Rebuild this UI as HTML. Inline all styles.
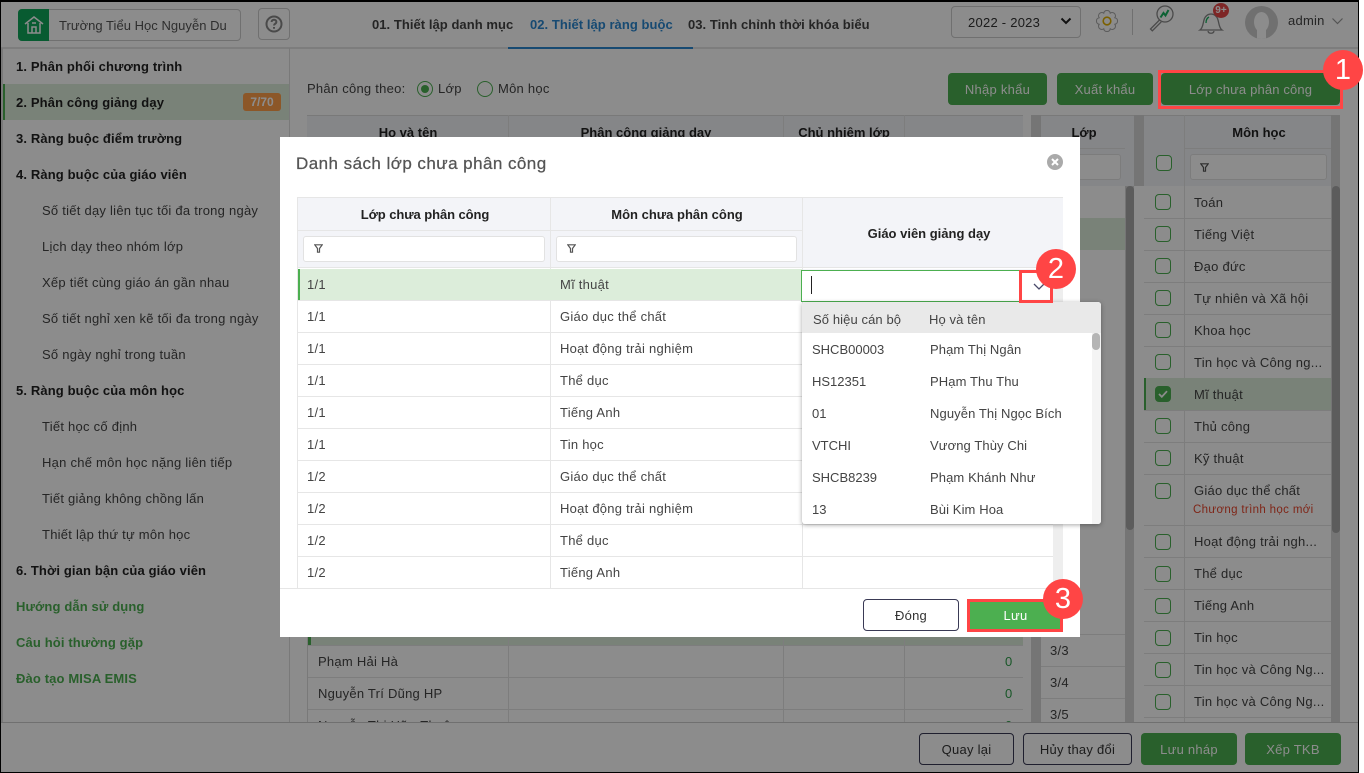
<!DOCTYPE html>
<html lang="vi"><head><meta charset="utf-8"><title>Danh sách lớp chưa phân công</title>
<style>
*{box-sizing:border-box}
html,body{margin:0;padding:0;width:1364px;height:773px;overflow:hidden;background:#fff}
body{position:relative;font-family:"Liberation Sans","DejaVu Sans",sans-serif;font-size:13px;letter-spacing:.25px;color:#444}
div,span,svg{position:absolute}
.t{white-space:nowrap;line-height:22px;height:22px}
.b{font-weight:700;color:#222;letter-spacing:.13px}
.h{letter-spacing:0}
.c{transform:translateX(-50%)}
.g{color:#4caf50;font-weight:700;letter-spacing:.13px}
.l{background:#e3e3e3}
.btn{background:#4caf50;border-radius:4px;color:#fff;text-align:center;line-height:34px;height:32px;white-space:nowrap}
.obtn{background:#fff;border:1px solid #3a3a55;border-radius:4px;color:#333;text-align:center;line-height:32px;height:32px;white-space:nowrap}
.ck{width:16px;height:16px;border:1.5px solid #4caf50;border-radius:4px;background:#fff;left:1155px}
.inp{background:#fff;border:1px solid #e2e2e2;border-radius:3px}
.red{border:3px solid #ff4545}
.num{width:40px;height:40px;border-radius:50%;background:#ff4545;color:#fff;text-align:center;font-size:29px;line-height:40px;letter-spacing:0}
#dd .t{letter-spacing:.1px}
</style></head><body>

<!-- BASE PAGE -->
<div id="page" style="left:0;top:0;width:1358px;height:772px;background:#fff;overflow:hidden">
  <!-- header -->
  <div class="l" style="left:0;top:47px;width:1358px;height:2px"></div>
  <div style="left:18px;top:9px;width:223px;height:32px;border:1px solid #ccc;border-radius:4px"></div>
  <div style="left:18px;top:9px;width:31px;height:32px;background:#0fa65a;border-radius:4px 0 0 4px"></div>
  <svg style="left:24px;top:15px" width="20" height="20" viewBox="0 0 20 20" fill="none" stroke="#fff" stroke-width="1.5"><path d="M1 9 10 2l9 7M4 8v10h12V8M8 18v-6h4v6M8 8h4"/></svg>
  <span class="t" style="left:59px;top:15px;color:#555;letter-spacing:.03px">Trường Tiểu Học Nguyễn Du</span>
  <div style="left:258px;top:8px;width:32px;height:32px;border:1px solid #ccc;border-radius:4px"></div>
  <svg style="left:265px;top:15px" width="18" height="18" viewBox="0 0 18 18" fill="none" stroke="#888" stroke-width="2"><circle cx="9" cy="9" r="7.5"/><path d="M6.6 7c0-3 4.8-3 4.8 0 0 1.800-2.400 1.700-2.400 3.500M9 12v1.800"/></svg>
  <span class="t b" style="left:372px;top:14px;color:#444;letter-spacing:.05px">01. Thiết lập danh mục</span>
  <span class="t b" style="left:530px;top:14px;color:#2a87d0;letter-spacing:.05px">02. Thiết lập ràng buộc</span>
  <span class="t b" style="left:688px;top:14px;color:#444;letter-spacing:.05px">03. Tinh chỉnh thời khóa biểu</span>
  <div style="left:508px;top:47px;width:185px;height:2px;background:#2a87d0"></div>
  <div style="left:951px;top:6px;width:130px;height:32px;border:1px solid #ccc;border-radius:4px"></div>
  <span class="t" style="left:968px;top:12px;color:#333">2022 - 2023</span>
  <svg style="left:1060px;top:17px" width="12" height="9" viewBox="0 0 12 9" fill="none" stroke="#222" stroke-width="2"><path d="M1.500 1.500 6 6l4.500-4.500"/></svg>
  <svg style="left:1096px;top:10px" width="22" height="22" viewBox="0 0 22 22" fill="none"><circle cx="11" cy="11" r="3.800" stroke="#e0b000" stroke-width="1.600"/><path d="M18.850 7.750A3.300 3.300 0 0 1 18.850 14.250 3.300 3.300 0 0 1 14.250 18.850 3.300 3.300 0 0 1 7.750 18.850 3.300 3.300 0 0 1 3.150 14.250 3.300 3.300 0 0 1 3.150 7.750 3.300 3.300 0 0 1 7.750 3.150 3.300 3.300 0 0 1 14.250 3.150 3.300 3.300 0 0 1 18.850 7.750Z" stroke="#aaa" stroke-width="1.100"/></svg>
  <div class="l" style="left:1132px;top:9px;width:1px;height:26px;background:#ccc"></div>
  <svg style="left:1148px;top:5px" width="28" height="28" viewBox="0 0 28 28" fill="none"><circle cx="17" cy="9" r="8" stroke="#888" stroke-width="1.300"/><path d="M11.500 15 2.500 24l1.800 1.800 9-9" stroke="#888" stroke-width="1.300"/><path d="m12.500 12.500 3-4.500 2 2.500 3-5.500" stroke="#17b35f" stroke-width="2"/></svg>
  <svg style="left:1198px;top:8px" width="26" height="27" viewBox="0 0 26 27" fill="none" stroke="#888" stroke-width="1.300"><path d="M2 22c3-2 3-7 4-10 1-4 4-6 7-6s6 2 7 6c1 3 1 8 4 10zM10 23c.5 3 5.500 3 6 0"/><path d="M8 15c0-3 1-5 3-6" stroke="#17b35f"/></svg>
  <div style="left:1213px;top:3px;width:16px;height:15px;border-radius:50%;background:#e64545;color:#fff;font-size:10px;font-weight:700;text-align:center;line-height:15px;letter-spacing:0">9+</div>
  <div style="left:1245px;top:6px;width:33px;height:33px;border-radius:50%;background:#ccc;overflow:hidden"><div style="left:9px;top:6px;width:15px;height:20px;border-radius:50%;background:#fff"></div><div style="left:12px;top:24px;width:9px;height:9px;background:#fff"></div></div>
  <span class="t" style="left:1288px;top:10px;color:#444">admin</span>
  <svg style="left:1332px;top:18px" width="11" height="7" viewBox="0 0 11 7" fill="none" stroke="#999" stroke-width="1.200"><path d="M.5.500l5 5 5-5"/></svg>

  <!-- sidebar -->
  <div style="left:289px;top:48px;width:1px;height:674px;background:#ddd"></div>
  <div style="left:0;top:48px;width:3px;height:724px;background:#ddd"></div>
  <div style="left:3px;top:84px;width:286px;height:36px;background:#dcedda"></div>
  <div style="left:3px;top:84px;width:2px;height:36px;background:#4caf50"></div>
  <span class="t b" style="left:16px;top:56px">1. Phân phối chương trình</span>
  <span class="t b" style="left:16px;top:92px">2. Phân công giảng dạy</span>
  <div style="left:243px;top:93px;width:38px;height:18px;background:#ff9f4a;border-radius:3px;color:#fff;font-size:12px;font-weight:700;text-align:center;line-height:18px;letter-spacing:0">7/70</div>
  <span class="t b" style="left:16px;top:128px">3. Ràng buộc điểm trường</span>
  <span class="t b" style="left:16px;top:164px">4. Ràng buộc của giáo viên</span>
  <span class="t" style="left:42px;top:200px">Số tiết dạy liên tục tối đa trong ngày</span>
  <span class="t" style="left:42px;top:236px">Lịch dạy theo nhóm lớp</span>
  <span class="t" style="left:42px;top:272px">Xếp tiết cùng giáo án gần nhau</span>
  <span class="t" style="left:42px;top:308px">Số tiết nghỉ xen kẽ tối đa trong ngày</span>
  <span class="t" style="left:42px;top:344px">Số ngày nghỉ trong tuần</span>
  <span class="t b" style="left:16px;top:380px">5. Ràng buộc của môn học</span>
  <span class="t" style="left:42px;top:416px">Tiết học cố định</span>
  <span class="t" style="left:42px;top:452px">Hạn chế môn học nặng liên tiếp</span>
  <span class="t" style="left:42px;top:488px">Tiết giảng không chồng lấn</span>
  <span class="t" style="left:42px;top:524px">Thiết lập thứ tự môn học</span>
  <span class="t b" style="left:16px;top:560px">6. Thời gian bận của giáo viên</span>
  <span class="t g" style="left:16px;top:596px">Hướng dẫn sử dụng</span>
  <span class="t g" style="left:16px;top:632px">Câu hỏi thường gặp</span>
  <span class="t g" style="left:16px;top:668px">Đào tạo MISA EMIS</span>

  <!-- toolbar -->
  <span class="t" style="left:307px;top:78px">Phân công theo:</span>
  <div style="left:417px;top:81px;width:16px;height:16px;border:1.500px solid #4caf50;border-radius:50%"></div>
  <div style="left:421px;top:85px;width:8px;height:8px;background:#4caf50;border-radius:50%"></div>
  <span class="t" style="left:438px;top:78px">Lớp</span>
  <div style="left:477px;top:81px;width:16px;height:16px;border:1.500px solid #4caf50;border-radius:50%"></div>
  <span class="t" style="left:498px;top:78px">Môn học</span>
  <div class="btn" style="left:948px;top:73px;width:99px">Nhập khẩu</div>
  <div class="btn" style="left:1057px;top:73px;width:96px">Xuất khẩu</div>
  <div class="btn" style="left:1161px;top:73px;width:179px;letter-spacing:.15px">Lớp chưa phân công</div>

  <!-- main table -->
  <div style="left:307px;top:115px;width:716px;height:607px;background:#fff;border-left:1px solid #ddd"></div>
  <div style="left:307px;top:115px;width:716px;height:71px;background:#f3f4f8;border-top:1px solid #ddd"></div>
  <span class="t b h c" style="left:408px;top:122px">Họ và tên</span>
  <span class="t b h c" style="left:646px;top:122px">Phân công giảng dạy</span>
  <span class="t b h c" style="left:844px;top:122px">Chủ nhiệm lớp</span>
  <div style="left:309px;top:630px;width:714px;height:15px;background:#dcedda"></div>
  <div style="left:308px;top:630px;width:3px;height:15px;background:#4caf50"></div>
  <div class="l" style="left:308px;top:645px;width:715px;height:1px"></div>
  <div class="l" style="left:308px;top:677px;width:715px;height:1px"></div>
  <div class="l" style="left:308px;top:709px;width:715px;height:1px"></div>
  <div class="l" style="left:508px;top:115px;width:1px;height:607px"></div>
  <div class="l" style="left:783px;top:115px;width:1px;height:607px"></div>
  <div class="l" style="left:904px;top:115px;width:1px;height:607px"></div>
  <span class="t" style="left:318px;top:651px">Phạm Hải Hà</span>
  <span class="t" style="left:318px;top:683px">Nguyễn Trí Dũng HP</span>
  <span class="t" style="left:318px;top:715px">Nguyễn Thị Hữu Thuận</span>
  <span class="t" style="left:1005px;top:651px;color:#2e9e4a">0</span>
  <span class="t" style="left:1005px;top:683px;color:#2e9e4a">0</span>
  <span class="t" style="left:1005px;top:715px;color:#2e9e4a">0</span>
  <div style="left:1031px;top:115px;width:10px;height:607px;background:#d5d5d5"></div>

  <!-- class table -->
  <div style="left:1041px;top:115px;width:93px;height:71px;background:#f3f4f8;border-top:1px solid #ddd"></div>
  <div class="l" style="left:1041px;top:148px;width:84px;height:1px"></div>
  <span class="t b h c" style="left:1084px;top:122px">Lớp</span>
  <div class="inp" style="left:1050px;top:154px;width:71px;height:26px"></div>
  <div style="left:1080px;top:218px;width:45px;height:32px;background:#dcedda"></div>
  <div class="l" style="left:1041px;top:634px;width:84px;height:1px"></div>
  <div class="l" style="left:1041px;top:666px;width:84px;height:1px"></div>
  <div class="l" style="left:1041px;top:698px;width:84px;height:1px"></div>
  <span class="t" style="left:1050px;top:640px">3/3</span>
  <span class="t" style="left:1050px;top:672px">3/4</span>
  <span class="t" style="left:1050px;top:704px">3/5</span>
  <div style="left:1125px;top:186px;width:9px;height:536px;background:#d5d5d5"></div>
  <div style="left:1134px;top:115px;width:10px;height:71px;background:#d5d5d5"></div>
  <div style="left:1126px;top:186px;width:8px;height:344px;background:#a8a8a8;border-radius:4px"></div>

  <!-- subjects table -->
  <div style="left:1144px;top:115px;width:187px;height:71px;background:#f3f4f8;border-top:1px solid #ddd"></div>
  <div class="l" style="left:1184px;top:115px;width:1px;height:607px"></div>
  <div class="l" style="left:1184px;top:148px;width:147px;height:1px"></div>
  <span class="t b h c" style="left:1259px;top:122px">Môn học</span>
  <div class="ck" style="left:1156px;top:155px"></div>
  <div class="inp" style="left:1190px;top:154px;width:137px;height:26px"></div>
  <svg style="left:1200px;top:163px" width="9" height="9" viewBox="0 0 9 9" fill="none" stroke="#555" stroke-width="1.200"><path d="M.8.800h7.400L5.500 4.500v3.700h-2V4.500z"/></svg>
  <div class="l" style="left:1144px;top:218px;width:187px;height:1px"></div>
  <div class="l" style="left:1144px;top:250px;width:187px;height:1px"></div>
  <div class="l" style="left:1144px;top:282px;width:187px;height:1px"></div>
  <div class="l" style="left:1144px;top:314px;width:187px;height:1px"></div>
  <div class="l" style="left:1144px;top:346px;width:187px;height:1px"></div>
  <div class="l" style="left:1144px;top:378px;width:187px;height:1px"></div>
  <div class="l" style="left:1144px;top:410px;width:187px;height:1px"></div>
  <div class="l" style="left:1144px;top:442px;width:187px;height:1px"></div>
  <div class="l" style="left:1144px;top:474px;width:187px;height:1px"></div>
  <div class="l" style="left:1144px;top:525px;width:187px;height:1px"></div>
  <div class="l" style="left:1144px;top:557px;width:187px;height:1px"></div>
  <div class="l" style="left:1144px;top:589px;width:187px;height:1px"></div>
  <div class="l" style="left:1144px;top:621px;width:187px;height:1px"></div>
  <div class="l" style="left:1144px;top:653px;width:187px;height:1px"></div>
  <div class="l" style="left:1144px;top:685px;width:187px;height:1px"></div>
  <div class="l" style="left:1144px;top:717px;width:187px;height:1px"></div>
  <div style="left:1144px;top:378px;width:187px;height:32px;background:#dcedda"></div>
  <div style="left:1144px;top:378px;width:2px;height:32px;background:#4caf50"></div>
  <div class="ck" style="top:194px"></div><span class="t" style="left:1194px;top:192px">Toán</span>
  <div class="ck" style="top:226px"></div><span class="t" style="left:1194px;top:224px">Tiếng Việt</span>
  <div class="ck" style="top:258px"></div><span class="t" style="left:1194px;top:256px">Đạo đức</span>
  <div class="ck" style="top:290px"></div><span class="t" style="left:1194px;top:288px">Tự nhiên và Xã hội</span>
  <div class="ck" style="top:322px"></div><span class="t" style="left:1194px;top:320px">Khoa học</span>
  <div class="ck" style="top:354px"></div><span class="t" style="left:1194px;top:352px">Tin học và Công ng...</span>
  <div class="ck" style="top:386px;background:#4caf50"></div>
  <svg style="left:1158px;top:390px" width="10" height="8" viewBox="0 0 10 8" fill="none" stroke="#fff" stroke-width="1.800"><path d="m1 4 2.800 2.800L9 1.200"/></svg>
  <span class="t" style="left:1194px;top:384px">Mĩ thuật</span>
  <div class="ck" style="top:418px"></div><span class="t" style="left:1194px;top:416px">Thủ công</span>
  <div class="ck" style="top:450px"></div><span class="t" style="left:1194px;top:448px">Kỹ thuật</span>
  <div class="ck" style="top:483px"></div><span class="t" style="left:1194px;top:480px">Giáo dục thể chất</span>
  <span class="t" style="left:1193px;top:499px;font-size:11.500px;color:#e8452c;letter-spacing:.35px">Chương trình học mới</span>
  <div class="ck" style="top:534px"></div><span class="t" style="left:1194px;top:531px">Hoạt động trải ngh...</span>
  <div class="ck" style="top:566px"></div><span class="t" style="left:1194px;top:563px">Thể dục</span>
  <div class="ck" style="top:598px"></div><span class="t" style="left:1194px;top:595px">Tiếng Anh</span>
  <div class="ck" style="top:630px"></div><span class="t" style="left:1194px;top:627px">Tin học</span>
  <div class="ck" style="top:662px"></div><span class="t" style="left:1194px;top:659px">Tin học và Công Ng...</span>
  <div class="ck" style="top:694px"></div><span class="t" style="left:1194px;top:691px">Tin học và Công Ng...</span>
  <div style="left:1331px;top:115px;width:9px;height:607px;background:#d5d5d5"></div>
  <div style="left:1332px;top:186px;width:8px;height:347px;background:#a8a8a8;border-radius:4px"></div>

  <!-- bottom bar -->
  <div style="left:0;top:722px;width:1358px;height:50px;background:#fff;border-top:1px solid #ccc"></div>
  <div class="obtn" style="left:919px;top:733px;width:95px">Quay lại</div>
  <div class="obtn" style="left:1023px;top:733px;width:109px">Hủy thay đổi</div>
  <div class="btn" style="left:1141px;top:733px;width:96px">Lưu nháp</div>
  <div class="btn" style="left:1245px;top:733px;width:96px">Xếp TKB</div>
</div>

<!-- OVERLAY -->
<div style="left:0;top:0;width:1358px;height:772px;background:rgba(0,0,0,.45)"></div>

<!-- FRAME -->
<div style="left:0;top:0;width:1359px;height:2px;background:#000"></div>
<div style="left:0;top:0;width:1px;height:773px;background:#000"></div>
<div style="left:1358px;top:0;width:1px;height:773px;background:#000"></div>
<div style="left:0;top:772px;width:1359px;height:1px;background:#000"></div>

<!-- MODAL -->
<div style="left:280px;top:137px;width:800px;height:500px;background:#fff"></div>
<span class="t" style="left:296px;top:153px;font-size:17px;color:#555;letter-spacing:.45px;-webkit-text-stroke:.25px #555">Danh sách lớp chưa phân công</span>
<svg style="left:1047px;top:154px" width="16" height="16" viewBox="0 0 16 16"><circle cx="8" cy="8" r="8" fill="#aaa"/><path d="m5 5 6 6m0-6-6 6" stroke="#fff" stroke-width="2"/></svg>

<div style="left:297px;top:197px;width:766px;height:391px;overflow:hidden;border-left:1px solid #e6e6e6">
  <div style="left:0;top:0;width:766px;height:71px;background:#f3f4f8;border-top:1px solid #e6e6e6"></div>
  <div class="l" style="left:0;top:33px;width:505px;height:1px;background:#e6e6e6"></div>
  <div class="l" style="left:0;top:70px;width:766px;height:1px;background:#e6e6e6"></div>
  <div class="l" style="left:252px;top:0;width:1px;height:391px;background:#e6e6e6"></div>
  <div class="l" style="left:504px;top:0;width:1px;height:391px;background:#e6e6e6"></div>
  <div style="left:765px;top:0;width:1px;height:71px;background:#e6e6e6"></div>
  <div class="inp" style="left:5px;top:39px;width:242px;height:26px"></div>
  <div class="inp" style="left:258px;top:39px;width:241px;height:26px"></div>
  <svg style="left:16px;top:47px" width="9" height="9" viewBox="0 0 9 9" fill="none" stroke="#555" stroke-width="1.200"><path d="M.8.800h7.400L5.500 4.500v3.700h-2V4.500z"/></svg>
  <svg style="left:269px;top:47px" width="9" height="9" viewBox="0 0 9 9" fill="none" stroke="#555" stroke-width="1.200"><path d="M.8.800h7.400L5.500 4.500v3.700h-2V4.500z"/></svg>
  <span class="t b h c" style="left:127px;top:7px;letter-spacing:-.08px">Lớp chưa phân công</span>
  <span class="t b h c" style="left:379px;top:7px">Môn chưa phân công</span>
  <span class="t b h c" style="left:631px;top:26px">Giáo viên giảng dạy</span>

  <div style="left:0;top:72px;width:504px;height:32px;background:#dcedda"></div>
  <div style="left:0;top:72px;width:2px;height:32px;background:#4caf50"></div>
  <div style="left:505px;top:72px;width:261px;height:32px;background:#f3f4f8"></div>
  <div class="l" style="left:0;top:135px;width:756px;height:1px;background:#e6e6e6"></div>
  <div class="l" style="left:0;top:167px;width:756px;height:1px;background:#e6e6e6"></div>
  <div class="l" style="left:0;top:199px;width:756px;height:1px;background:#e6e6e6"></div>
  <div class="l" style="left:0;top:231px;width:756px;height:1px;background:#e6e6e6"></div>
  <div class="l" style="left:0;top:263px;width:756px;height:1px;background:#e6e6e6"></div>
  <div class="l" style="left:0;top:295px;width:756px;height:1px;background:#e6e6e6"></div>
  <div class="l" style="left:0;top:327px;width:756px;height:1px;background:#e6e6e6"></div>
  <div class="l" style="left:0;top:359px;width:756px;height:1px;background:#e6e6e6"></div>
  <div class="l" style="left:0;top:103px;width:756px;height:1px;background:#e6e6e6"></div>
  <div style="left:756px;top:71px;width:10px;height:320px;background:#eee"></div>

  <span class="t" style="left:9px;top:77px">1/1</span><span class="t" style="left:262px;top:77px">Mĩ thuật</span>
  <span class="t" style="left:9px;top:109px">1/1</span><span class="t" style="left:262px;top:109px">Giáo dục thể chất</span>
  <span class="t" style="left:9px;top:141px">1/1</span><span class="t" style="left:262px;top:141px">Hoạt động trải nghiệm</span>
  <span class="t" style="left:9px;top:173px">1/1</span><span class="t" style="left:262px;top:173px">Thể dục</span>
  <span class="t" style="left:9px;top:205px">1/1</span><span class="t" style="left:262px;top:205px">Tiếng Anh</span>
  <span class="t" style="left:9px;top:237px">1/1</span><span class="t" style="left:262px;top:237px">Tin học</span>
  <span class="t" style="left:9px;top:269px">1/2</span><span class="t" style="left:262px;top:269px">Giáo dục thể chất</span>
  <span class="t" style="left:9px;top:301px">1/2</span><span class="t" style="left:262px;top:301px">Hoạt động trải nghiệm</span>
  <span class="t" style="left:9px;top:333px">1/2</span><span class="t" style="left:262px;top:333px">Thể dục</span>
  <span class="t" style="left:9px;top:365px">1/2</span><span class="t" style="left:262px;top:365px">Tiếng Anh</span>
</div>
<div style="left:280px;top:588px;width:800px;height:1px;background:#e6e6e6"></div>
<div style="left:1053px;top:270px;width:10px;height:318px;background:#eee"></div>

<!-- editor -->
<div style="left:801px;top:270px;width:252px;height:32px;background:#fff;border:1px solid #4caf50"></div>
<div style="left:811px;top:276px;width:1px;height:18px;background:#222"></div>
<svg style="left:1033px;top:283px" width="12" height="8" viewBox="0 0 12 8" fill="none" stroke="#4a4a6a" stroke-width="1.300"><path d="m1 1 5 5 5-5"/></svg>

<!-- dropdown -->
<div id="dd" style="left:802px;top:302px;width:299px;height:222px;background:#fff;border-radius:3px;box-shadow:0 1px 5px rgba(0,0,0,.35);overflow:hidden">
  <div style="left:0;top:0;width:299px;height:31px;background:#e9e9e9"></div>
  <span class="t" style="left:11px;top:7px">Số hiệu cán bộ</span><span class="t" style="left:127px;top:7px">Họ và tên</span>
  <span class="t" style="left:10px;top:37px;letter-spacing:0">SHCB00003</span><span class="t" style="left:128px;top:37px">Phạm Thị Ngân</span>
  <span class="t" style="left:10px;top:69px;letter-spacing:0">HS12351</span><span class="t" style="left:128px;top:69px">PHạm Thu Thu</span>
  <span class="t" style="left:10px;top:101px;letter-spacing:0">01</span><span class="t" style="left:128px;top:101px">Nguyễn Thị Ngọc Bích</span>
  <span class="t" style="left:10px;top:133px;letter-spacing:0">VTCHI</span><span class="t" style="left:128px;top:133px">Vương Thùy Chi</span>
  <span class="t" style="left:10px;top:165px;letter-spacing:0">SHCB8239</span><span class="t" style="left:128px;top:165px">Phạm Khánh Như</span>
  <span class="t" style="left:10px;top:197px;letter-spacing:0">13</span><span class="t" style="left:128px;top:197px">Bùi Kim Hoa</span>
  <div style="left:290px;top:31px;width:9px;height:191px;background:#f4f4f4"></div>
  <div style="left:290px;top:31px;width:8px;height:17px;background:#b5b5b5;border-radius:4px"></div>
</div>

<!-- modal buttons -->
<div class="obtn" style="left:863px;top:599px;width:96px">Đóng</div>
<div class="btn" style="left:968px;top:600px;width:95px;line-height:31px;height:32px;border-radius:0">Lưu</div>

<!-- annotations -->
<div class="red" style="left:1158px;top:70px;width:185px;height:39px"></div>
<div class="num" style="left:1323px;top:50px">1</div>
<div class="red" style="left:1019px;top:270px;width:34px;height:33px"></div>
<div class="num" style="left:1036px;top:249px">2</div>
<div class="red" style="left:967px;top:599px;width:96px;height:33px"></div>
<div class="num" style="left:1043px;top:579px">3</div>
</body></html>
